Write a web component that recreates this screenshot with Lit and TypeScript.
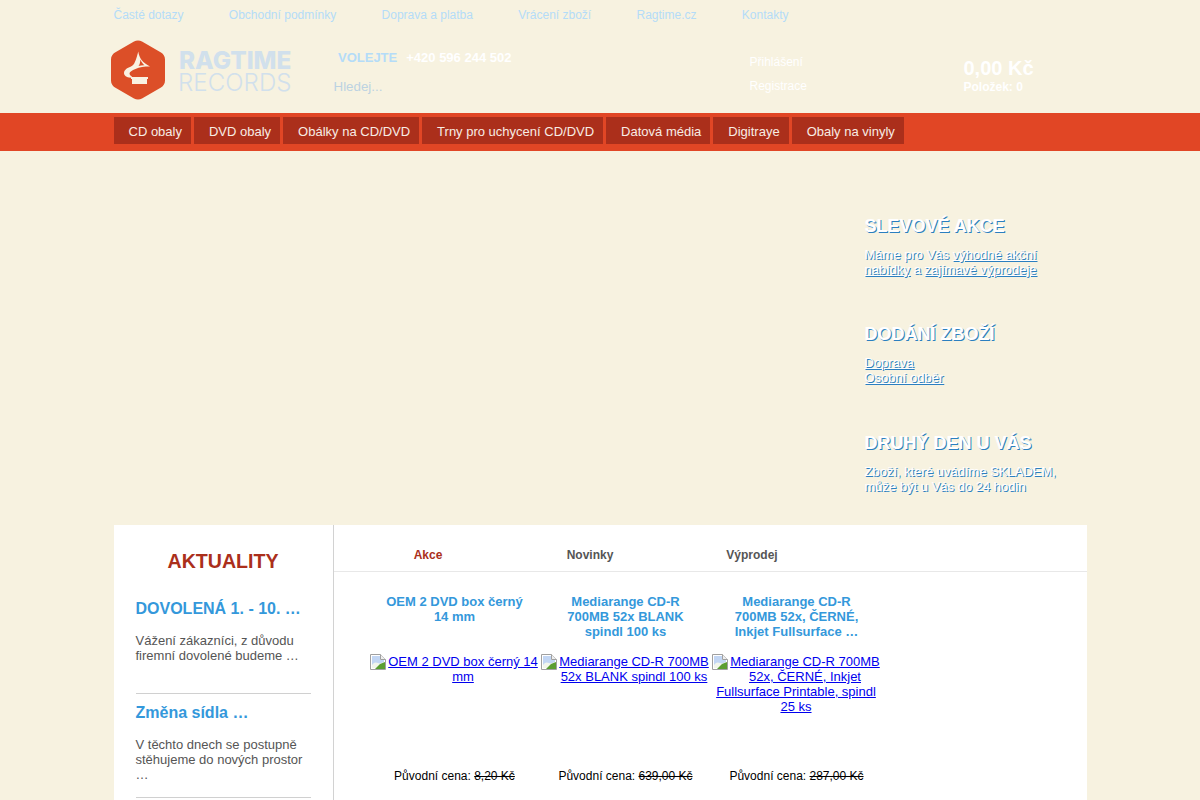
import { LitElement, html, css } from "lit";
import { customElement } from "lit/decorators.js";

const topLinks = ["Časté dotazy", "Obchodní podmínky", "Doprava a platba", "Vrácení zboží", "Ragtime.cz", "Kontakty"];
const navItems = ["CD obaly", "DVD obaly", "Obálky na CD/DVD", "Trny pro uchycení CD/DVD", "Datová média", "Digitraye", "Obaly na vinyly"];
const products = [
  { title: "OEM 2 DVD box černý 14 mm", alt: "OEM 2 DVD box černý 14 mm", price: "8,20 Kč" },
  { title: "Mediarange CD-R 700MB 52x BLANK spindl 100 ks", alt: "Mediarange CD-R 700MB 52x BLANK spindl 100 ks", price: "639,00 Kč" },
  { title: "Mediarange CD-R 700MB 52x, ČERNÉ, Inkjet Fullsurface …", alt: "Mediarange CD-R 700MB 52x, ČERNÉ, Inkjet Fullsurface Printable, spindl 25 ks", price: "287,00 Kč" },
];

const brokenIcon = html`<svg class="broken" width="16" height="16" viewBox="0 0 16 16">
  <path d="M.5.5h10l5 5v10H.5z" fill="#fff" stroke="#a0a0a0"/>
  <path d="M2 2h8v4h4v8H2z" fill="#c2d6f4"/>
  <path d="M2 14v-3c2-3 4-3 6-2 2 1 3 0 6-1v6z" fill="#f2f6ec"/>
  <path d="M5 15l5-5 5-2v7z" fill="#5a9e32"/>
  <path d="M10.5.5v5h5" fill="#eee" stroke="#a0a0a0"/>
</svg>`;

@customElement("app-root")
export class AppRoot extends LitElement {
  static styles = css`
    :host { display: block; height: 800px; overflow: hidden; background: #f7f2e0; font-family: "Liberation Sans", Arial, sans-serif; font-size: 13px; }
    a { color: inherit; text-decoration: none; }

    .top { display: flex; gap: 45.3px; height: 30px; align-items: center; padding-left: 113.5px; font-size: 12px; color: #b4dcf8; }

    .head { display: grid; grid-template-columns: 223px 416px 214px 1fr; height: 83px; padding-left: 110.5px; }
    .logo { display: flex; align-items: center; gap: 14px; padding: 0 0 4px 0.5px; }
    .wordmark { display: flex; flex-direction: column; margin-top: 4px; font-family: Inter, sans-serif; color: #d1e0ec; }
    .rag { font-size: 24.3px; font-weight: 800; line-height: 21.5px; }
    .rec { font-size: 24px; font-weight: 300; line-height: 21.5px; letter-spacing: 0.1px; margin-left: -1px; }
    .contact { display: flex; flex-direction: column; padding-top: 20px; }
    .phone { display: flex; gap: 9px; padding-left: 4.5px; font-weight: bold; color: #b4dcf8; line-height: 15px; }
    .phone b { color: #fff; }
    .search { margin-top: 14px; font-size: 13.333px; line-height: 16px; color: #bcd2e2; }
    .account { display: flex; flex-direction: column; gap: 10px; padding-top: 25px; font-size: 12px; line-height: 14px; color: #fff; }
    .cart { padding-top: 27px; color: #fff; font-weight: bold; }
    .sum { font-size: 20px; line-height: 23px; }
    .count { font-size: 12px; line-height: 14px; }

    nav { display: flex; gap: 3px; height: 38px; padding: 4px 0 7px 113.5px; box-sizing: border-box; background: #e14625; }
    nav a { display: flex; align-items: center; padding: 1px 9px 0 15px; background: #ab2f1b; color: #f8ece4; font-size: 13px; }

    .hero { display: flex; flex-direction: column; gap: 47.3px; height: 374px; box-sizing: border-box; padding: 64.5px 0 0 864.5px; color: #fff; text-shadow: 1px 1px 0 #2b7fc0; }
    .hero h2 { margin: 0 0 10.3px; font-size: 18px; line-height: 21px; font-weight: bold; }
    .hero p { margin: 0; line-height: 15px; width: 200px; }
    .hero a { text-decoration: underline; }
    .hero .links a { display: block; width: max-content; }

    .card { display: grid; grid-template-columns: 220px 1fr; width: 973px; margin-left: 113.5px; background: #fff; }
    .side { border-right: 1px solid #d2d2d2; padding: 0 22px; height: 400px; }
    .side h2 { margin: 0; padding-top: 24px; text-align: center; font-size: 19.6px; line-height: 24px; color: #ab2f1b; }
    .news { border-bottom: 1px solid #d0d0d0; }
    .news h3 { margin: 0 0 14px; font-size: 16px; line-height: 20px; color: #3498db; white-space: nowrap; }
    .news p { margin: 0; color: #555; line-height: 15px; }
    .n1 { margin-top: 26px; height: 94px; }
    .n2 { padding-top: 9px; height: 94px; }

    .tabs { display: flex; height: 46px; padding-left: 13.5px; border-bottom: 1px solid #e8e8e8; font-size: 12px; font-weight: bold; color: #555; }
    .tabs span { width: 162px; text-align: center; line-height: 1; padding-top: 24px; }
    .tabs .on { color: #ab2f1b; }
    .grid { display: grid; grid-template-columns: repeat(3, 171px); padding: 22px 0 0 35.5px; }
    .prod { display: flex; flex-direction: column; align-items: center; text-align: center; }
    .prod h3 { margin: 0; width: 150px; height: 60px; font-size: 13px; line-height: 15px; color: #3498db; }
    .img { align-self: flex-start; width: 170px; height: 115px; line-height: 15px; }
    .img a { color: #0000ee; text-decoration: underline; }
    .broken { float: left; margin: 0 1px; }
    .price { font-size: 12px; line-height: 15px; color: #000; }
    .price s { text-decoration: line-through; }
  `;

  render() {
    return html`
      <div class="top">${topLinks.map((t) => html`<a href="#">${t}</a>`)}</div>
      <div class="head">
        <div class="logo">
          <svg width="54" height="60" viewBox="0 0 54 60">
            <path d="M23 1.5c2.500-1.400 5.500-1.400 8 0l19 11c2.500 1.400 4 4 4 7v21c0 3-1.500 5.600-4 7l-19 11c-2.500 1.400-5.500 1.400-8 0l-19-11c-2.500-1.400-4-4-4-7v-21c0-3 1.500-5.600 4-7z" fill="#dc4f28"/>
            <path d="M27.300 11.500C28 18 32 23 39 26.500C33 26.500 28.500 27 24.500 29C21 30.500 18.500 31.800 18.500 33.500C18.500 35 20 36 21 36.500L19.500 37.800C15.500 37.300 13 35.500 13 33C13 30 16.500 27.800 19.500 26.800C23.500 25.500 25 20 27.300 11.500z" fill="#f9f2e2"/>
            <path d="M29.300 19.500C29.300 22.500 28.500 25 27.500 26C29.500 25.500 31.500 25.200 33.500 25.300C32 24 30.300 22 29.300 19.500z" fill="#dc4f28"/>
            <path d="M20 37h17v2h-1v5H21v-5h-1z" fill="#f9f2e2"/>
          </svg>
          <div class="wordmark"><span class="rag">RAGTIME</span><span class="rec">RECORDS</span></div>
        </div>
        <div class="contact">
          <div class="phone"><span>VOLEJTE</span><b>+420 596 244 502</b></div>
          <div class="search">Hledej...</div>
        </div>
        <div class="account"><a href="#">Přihlášení</a><a href="#">Registrace</a></div>
        <div class="cart"><div class="sum">0,00 Kč</div><div class="count">Položek: 0</div></div>
      </div>
      <nav>${navItems.map((t) => html`<a href="#">${t}</a>`)}</nav>
      <div class="hero">
        <section>
          <h2>SLEVOVÉ AKCE</h2>
          <p>Máme pro Vás <a href="#">výhodné akční nabídky</a> a <a href="#">zajímavé výprodeje</a></p>
        </section>
        <section>
          <h2>DODÁNÍ ZBOŽÍ</h2>
          <p class="links"><a href="#">Doprava</a><a href="#">Osobní odběr</a></p>
        </section>
        <section>
          <h2>DRUHÝ DEN U VÁS</h2>
          <p>Zboží, které uvádíme SKLADEM, může být u Vás do 24 hodin</p>
        </section>
      </div>
      <div class="card">
        <aside class="side">
          <h2>AKTUALITY</h2>
          <div class="news n1">
            <h3>DOVOLENÁ 1. - 10. …</h3>
            <p>Vážení zákazníci, z důvodu firemní dovolené budeme …</p>
          </div>
          <div class="news n2">
            <h3>Změna sídla …</h3>
            <p>V těchto dnech se postupně stěhujeme do nových prostor …</p>
          </div>
        </aside>
        <main>
          <div class="tabs"><span class="on">Akce</span><span>Novinky</span><span>Výprodej</span></div>
          <div class="grid">
            ${products.map((p) => html`
              <div class="prod">
                <h3>${p.title}</h3>
                <div class="img">${brokenIcon}<a href="#">${p.alt}</a></div>
                <div class="price">Původní cena: <s>${p.price}</s></div>
              </div>`)}
          </div>
        </main>
      </div>
    `;
  }
}
